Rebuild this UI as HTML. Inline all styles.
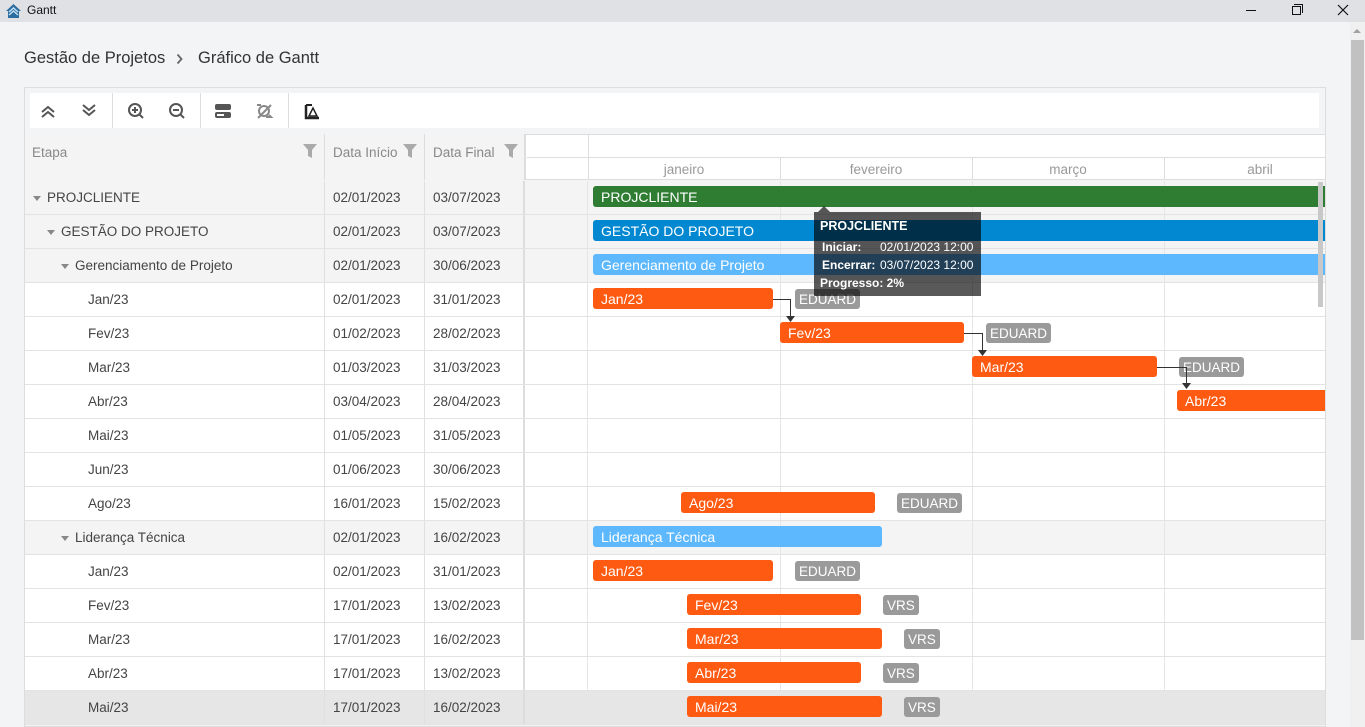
<!DOCTYPE html>
<html><head><meta charset="utf-8"><style>
*{margin:0;padding:0;box-sizing:border-box}
body{width:1365px;height:727px;overflow:hidden;background:#f3f4f6;font-family:"Liberation Sans",sans-serif;position:relative;color:#444}
.a{position:absolute}
.row{position:absolute;left:25px;width:1300px;height:34px;border-bottom:1px solid #e3e3e3;font-size:13.5px}
.row div{position:absolute;top:0;height:33px;line-height:34px}
.c1{left:0;width:300px;border-right:1px solid #e0e0e0}
.c2{left:300px;width:100px;border-right:1px solid #e0e0e0;padding-left:8px}
.c3{left:400px;width:100px;border-right:2px solid #ddd;padding-left:8px}
.c4{left:501px;width:62px;border-right:1px solid #e6e6e6}
.m{width:192px;border-right:1px solid #e6e6e6}
.tri{display:inline-block;width:0;height:0;border-left:4px solid transparent;border-right:4px solid transparent;border-top:5px solid #888;margin-right:6px;vertical-align:middle}
.bar{position:absolute;height:21px;border-radius:3px;color:#fff;font-size:14px;line-height:23px;padding-left:8px;white-space:nowrap;overflow:hidden}
.o{background:#fe5a12}
.lb{position:absolute;height:20px;background:#9a9a9a;color:#fff;font-size:13.5px;line-height:21px;padding:0 4px;border-radius:3px}
.tb{position:absolute;top:101px;width:20px;height:20px}
</style></head><body>
<div class="a" style="left:0;top:0;width:1365px;height:22px;background:#dfe1e5"></div>
<svg class="a" style="left:6px;top:3px" width="15" height="16" viewBox="0 0 15 16"><path d="M7.5 1 L0 8 L2 8 L2 15 L13 15 L13 8 L15 8Z" fill="#2d6c9e"/><path d="M3 9 L7.5 5 L12 9 M3 12 L7.5 8 L12 12" stroke="#bfe0f5" stroke-width="1.5" fill="none"/></svg>
<div class="a" style="left:27px;top:3px;font-size:12px;color:#111">Gantt</div>
<div class="a" style="left:1246px;top:10px;width:10px;height:1px;background:#111"></div>
<div class="a" style="left:1292px;top:6px;width:9px;height:9px;border:1px solid #111;background:#dfe1e5"></div>
<div class="a" style="left:1294px;top:4px;width:9px;height:9px;border-top:1px solid #111;border-right:1px solid #111"></div>
<svg class="a" style="left:1337px;top:4px" width="12" height="12"><path d="M1 1L11 11M11 1L1 11" stroke="#111" stroke-width="1.2"/></svg>
<div class="a" style="left:1350px;top:22px;width:15px;height:705px;background:#f0f0f0"></div>
<div class="a" style="left:1351px;top:40px;width:13px;height:600px;background:#c1c1c1"></div>
<div class="a" style="left:1353px;top:29px;width:0;height:0;border-left:4px solid transparent;border-right:4px solid transparent;border-bottom:4px solid #a0a0a0"></div>

<div class="a" style="left:24px;top:49px;font-size:16.5px;color:#333">Gestão de Projetos</div>
<svg class="a" style="left:176px;top:53px" width="8" height="12"><path d="M1.5 1.5l4 4.5-4 4.5" stroke="#666" stroke-width="1.8" fill="none"/></svg>
<div class="a" style="left:198px;top:49px;font-size:16.5px;color:#333">Gráfico de Gantt</div>

<div class="a" style="left:24px;top:87px;width:1302px;height:640px;background:#f3f4f6;border:1px solid #ddd"></div>
<div class="a" style="left:30px;top:93px;width:1289px;height:35px;background:#fff"></div>
<div class="a" style="left:112px;top:93px;width:1px;height:35px;background:#ddd"></div>
<div class="a" style="left:200px;top:93px;width:1px;height:35px;background:#ddd"></div>
<div class="a" style="left:288px;top:93px;width:1px;height:35px;background:#ddd"></div>
<svg class="tb" style="left:38px" viewBox="0 0 20 20"><path d="M4 11l6-5 6 5M4 16l6-5 6 5" stroke="#555" stroke-width="2" fill="none"/></svg>
<svg class="tb" style="left:79px" viewBox="0 0 20 20"><path d="M4 4l6 5 6-5M4 9l6 5 6-5" stroke="#555" stroke-width="2" fill="none"/></svg>
<svg class="tb" style="left:126px" viewBox="0 0 20 20"><circle cx="9" cy="9" r="6" stroke="#555" stroke-width="2" fill="none"/><path d="M13 13l4 4M6 9h6M9 6v6" stroke="#555" stroke-width="2"/></svg>
<svg class="tb" style="left:167px" viewBox="0 0 20 20"><circle cx="9" cy="9" r="6" stroke="#555" stroke-width="2" fill="none"/><path d="M13 13l4 4M6 9h6" stroke="#555" stroke-width="2"/></svg>
<svg class="tb" style="left:213px" viewBox="0 0 20 20"><rect x="2" y="3" width="16" height="6" rx="2" fill="#555"/><rect x="2" y="11" width="16" height="6" rx="2" fill="#555"/><rect x="4" y="13" width="7" height="2" fill="#fff"/></svg>
<svg class="tb" style="left:254px" viewBox="0 0 20 20"><circle cx="10" cy="10" r="5" stroke="#888" stroke-width="2" fill="none"/><path d="M3 4h4M4 17l13-13M12 16h5l-2-2" stroke="#888" stroke-width="2" fill="none"/></svg>
<svg class="tb" style="left:302px" viewBox="0 0 20 20"><path d="M4 4v13h13" stroke="#222" stroke-width="2.5" fill="none"/><path d="M4 4h6" stroke="#222" stroke-width="2"/><path d="M7 15l4-8 4 8z" stroke="#222" stroke-width="1.5" fill="none"/></svg>

<div class="a" style="left:25px;top:134px;width:1300px;height:46px;background:#fff;border-top:1px solid #ddd;border-bottom:1px solid #ddd"></div>
<div class="a" style="left:25px;top:134px;width:300px;height:46px;background:#f4f4f4;border-right:1px solid #ddd"></div>
<div class="a" style="left:325px;top:134px;width:100px;height:46px;background:#f4f4f4;border-right:1px solid #ddd"></div>
<div class="a" style="left:425px;top:134px;width:101px;height:46px;background:#f4f4f4;border-right:2px solid #ddd"></div>
<div class="a" style="left:32px;top:145px;font-size:13.5px;color:#888">Etapa</div>
<div class="a" style="left:333px;top:145px;font-size:13.5px;color:#888">Data Início</div>
<div class="a" style="left:433px;top:145px;font-size:13.5px;color:#888">Data Final</div>
<svg class="a" style="left:303px;top:144px" width="14" height="14"><path d="M0 0h14l-5 6v8l-4-2v-6z" fill="#aaa"/></svg>
<svg class="a" style="left:403px;top:144px" width="14" height="14"><path d="M0 0h14l-5 6v8l-4-2v-6z" fill="#aaa"/></svg>
<svg class="a" style="left:504px;top:144px" width="14" height="14"><path d="M0 0h14l-5 6v8l-4-2v-6z" fill="#aaa"/></svg>
<div class="a" style="left:527px;top:157px;width:798px;height:1px;background:#ddd"></div>
<div class="a" style="left:588px;top:134px;width:1px;height:46px;background:#ddd"></div>
<div class="a" style="left:780px;top:157px;width:1px;height:23px;background:#ddd"></div>
<div class="a" style="left:972px;top:157px;width:1px;height:23px;background:#ddd"></div>
<div class="a" style="left:1164px;top:157px;width:1px;height:23px;background:#ddd"></div>
<div class="a" style="left:588px;top:162px;width:192px;text-align:center;font-size:13.5px;color:#999">janeiro</div>
<div class="a" style="left:780px;top:162px;width:192px;text-align:center;font-size:13.5px;color:#999">fevereiro</div>
<div class="a" style="left:972px;top:162px;width:192px;text-align:center;font-size:13.5px;color:#999">março</div>
<div class="a" style="left:1164px;top:162px;width:192px;text-align:center;font-size:13.5px;color:#999">abril</div>

<div class="row" style="top:181px;background:#f4f4f4"><div class="c1" style="padding-left:8px"><span class="tri"></span>PROJCLIENTE</div><div class="c2">02/01/2023</div><div class="c3">03/07/2023</div><div class="c4"></div><div class="m" style="left:564px"></div><div class="m" style="left:756px"></div><div class="m" style="left:948px"></div></div>
<div class="row" style="top:215px;background:#f4f4f4"><div class="c1" style="padding-left:22px"><span class="tri"></span>GESTÃO DO PROJETO</div><div class="c2">02/01/2023</div><div class="c3">03/07/2023</div><div class="c4"></div><div class="m" style="left:564px"></div><div class="m" style="left:756px"></div><div class="m" style="left:948px"></div></div>
<div class="row" style="top:249px;background:#f4f4f4"><div class="c1" style="padding-left:36px"><span class="tri"></span>Gerenciamento de Projeto</div><div class="c2">02/01/2023</div><div class="c3">30/06/2023</div><div class="c4"></div><div class="m" style="left:564px"></div><div class="m" style="left:756px"></div><div class="m" style="left:948px"></div></div>
<div class="row" style="top:283px;background:#fff"><div class="c1" style="padding-left:63px">Jan/23</div><div class="c2">02/01/2023</div><div class="c3">31/01/2023</div><div class="c4"></div><div class="m" style="left:564px"></div><div class="m" style="left:756px"></div><div class="m" style="left:948px"></div></div>
<div class="row" style="top:317px;background:#fff"><div class="c1" style="padding-left:63px">Fev/23</div><div class="c2">01/02/2023</div><div class="c3">28/02/2023</div><div class="c4"></div><div class="m" style="left:564px"></div><div class="m" style="left:756px"></div><div class="m" style="left:948px"></div></div>
<div class="row" style="top:351px;background:#fff"><div class="c1" style="padding-left:63px">Mar/23</div><div class="c2">01/03/2023</div><div class="c3">31/03/2023</div><div class="c4"></div><div class="m" style="left:564px"></div><div class="m" style="left:756px"></div><div class="m" style="left:948px"></div></div>
<div class="row" style="top:385px;background:#fff"><div class="c1" style="padding-left:63px">Abr/23</div><div class="c2">03/04/2023</div><div class="c3">28/04/2023</div><div class="c4"></div><div class="m" style="left:564px"></div><div class="m" style="left:756px"></div><div class="m" style="left:948px"></div></div>
<div class="row" style="top:419px;background:#fff"><div class="c1" style="padding-left:63px">Mai/23</div><div class="c2">01/05/2023</div><div class="c3">31/05/2023</div><div class="c4"></div><div class="m" style="left:564px"></div><div class="m" style="left:756px"></div><div class="m" style="left:948px"></div></div>
<div class="row" style="top:453px;background:#fff"><div class="c1" style="padding-left:63px">Jun/23</div><div class="c2">01/06/2023</div><div class="c3">30/06/2023</div><div class="c4"></div><div class="m" style="left:564px"></div><div class="m" style="left:756px"></div><div class="m" style="left:948px"></div></div>
<div class="row" style="top:487px;background:#fff"><div class="c1" style="padding-left:63px">Ago/23</div><div class="c2">16/01/2023</div><div class="c3">15/02/2023</div><div class="c4"></div><div class="m" style="left:564px"></div><div class="m" style="left:756px"></div><div class="m" style="left:948px"></div></div>
<div class="row" style="top:521px;background:#f4f4f4"><div class="c1" style="padding-left:36px"><span class="tri"></span>Liderança Técnica</div><div class="c2">02/01/2023</div><div class="c3">16/02/2023</div><div class="c4"></div><div class="m" style="left:564px"></div><div class="m" style="left:756px"></div><div class="m" style="left:948px"></div></div>
<div class="row" style="top:555px;background:#fff"><div class="c1" style="padding-left:63px">Jan/23</div><div class="c2">02/01/2023</div><div class="c3">31/01/2023</div><div class="c4"></div><div class="m" style="left:564px"></div><div class="m" style="left:756px"></div><div class="m" style="left:948px"></div></div>
<div class="row" style="top:589px;background:#fff"><div class="c1" style="padding-left:63px">Fev/23</div><div class="c2">17/01/2023</div><div class="c3">13/02/2023</div><div class="c4"></div><div class="m" style="left:564px"></div><div class="m" style="left:756px"></div><div class="m" style="left:948px"></div></div>
<div class="row" style="top:623px;background:#fff"><div class="c1" style="padding-left:63px">Mar/23</div><div class="c2">17/01/2023</div><div class="c3">16/02/2023</div><div class="c4"></div><div class="m" style="left:564px"></div><div class="m" style="left:756px"></div><div class="m" style="left:948px"></div></div>
<div class="row" style="top:657px;background:#fff"><div class="c1" style="padding-left:63px">Abr/23</div><div class="c2">17/01/2023</div><div class="c3">13/02/2023</div><div class="c4"></div><div class="m" style="left:564px"></div><div class="m" style="left:756px"></div><div class="m" style="left:948px"></div></div>
<div class="row" style="top:691px;background:#e6e6e6"><div class="c1" style="padding-left:63px">Mai/23</div><div class="c2">17/01/2023</div><div class="c3">16/02/2023</div><div class="c4"></div><div class="m" style="left:564px"></div><div class="m" style="left:756px"></div><div class="m" style="left:948px"></div></div>

<div class="bar" style="left:593px;top:186px;width:732px;background:#2e7d32;border-radius:3px 0 0 3px">PROJCLIENTE</div>
<div class="bar" style="left:593px;top:220px;width:732px;background:#0288d1;border-radius:3px 0 0 3px">GESTÃO DO PROJETO</div>
<div class="bar" style="left:593px;top:254px;width:732px;background:#5eb8fd;border-radius:3px 0 0 3px">Gerenciamento de Projeto</div>
<div class="bar o" style="left:593px;top:288px;width:180px">Jan/23</div><div class="lb" style="left:795px;top:289px">EDUARD</div>
<div class="bar o" style="left:780px;top:322px;width:184px">Fev/23</div><div class="lb" style="left:986px;top:323px">EDUARD</div>
<div class="bar o" style="left:972px;top:356px;width:185px">Mar/23</div><div class="lb" style="left:1179px;top:357px">EDUARD</div>
<div class="bar o" style="left:1177px;top:390px;width:148px;border-radius:3px 0 0 3px">Abr/23</div>
<div class="bar o" style="left:681px;top:492px;width:194px">Ago/23</div><div class="lb" style="left:897px;top:493px">EDUARD</div>
<div class="bar" style="left:593px;top:526px;width:289px;background:#5eb8fd">Liderança Técnica</div>
<div class="bar o" style="left:593px;top:560px;width:180px">Jan/23</div><div class="lb" style="left:795px;top:561px">EDUARD</div>
<div class="bar o" style="left:687px;top:594px;width:174px">Fev/23</div><div class="lb" style="left:883px;top:595px">VRS</div>
<div class="bar o" style="left:687px;top:628px;width:195px">Mar/23</div><div class="lb" style="left:904px;top:629px">VRS</div>
<div class="bar o" style="left:687px;top:662px;width:174px">Abr/23</div><div class="lb" style="left:883px;top:663px">VRS</div>
<div class="bar o" style="left:687px;top:696px;width:195px">Mai/23</div><div class="lb" style="left:904px;top:697px">VRS</div>

<svg class="a" style="left:0;top:0" width="1365" height="727"><g stroke="#333" stroke-width="1" fill="none"><path d="M773 299.5h17.5v17M964 333.5h18.5v17M1157 367.5h29.5v16"/></g><g fill="#333"><path d="M786 316h9l-4.5 6z M978 350h9l-4.5 6z M1182 383h9l-4.5 6z"/></g></svg>
<div class="a" style="left:1318px;top:182px;width:5px;height:125px;background:#c8c8c8"></div>

<div class="a" style="left:818px;top:206px;width:0;height:0;border-left:6px solid transparent;border-right:6px solid transparent;border-bottom:6px solid rgba(0,0,0,.65)"></div>
<div class="a" style="left:814px;top:212px;width:167px;height:84px;background:rgba(0,0,0,.65);color:#fff;font-size:12px;font-weight:bold">
<div class="a" style="left:6px;top:7px;font-size:12.5px">PROJCLIENTE</div>
<div class="a" style="left:8px;top:28px">Iniciar:</div><div class="a" style="left:66px;top:28px;font-weight:normal">02/01/2023 12:00</div>
<div class="a" style="left:8px;top:46px">Encerrar:</div><div class="a" style="left:66px;top:46px;font-weight:normal">03/07/2023 12:00</div>
<div class="a" style="left:6px;top:64px">Progresso: 2%</div>
</div>
</body></html>
